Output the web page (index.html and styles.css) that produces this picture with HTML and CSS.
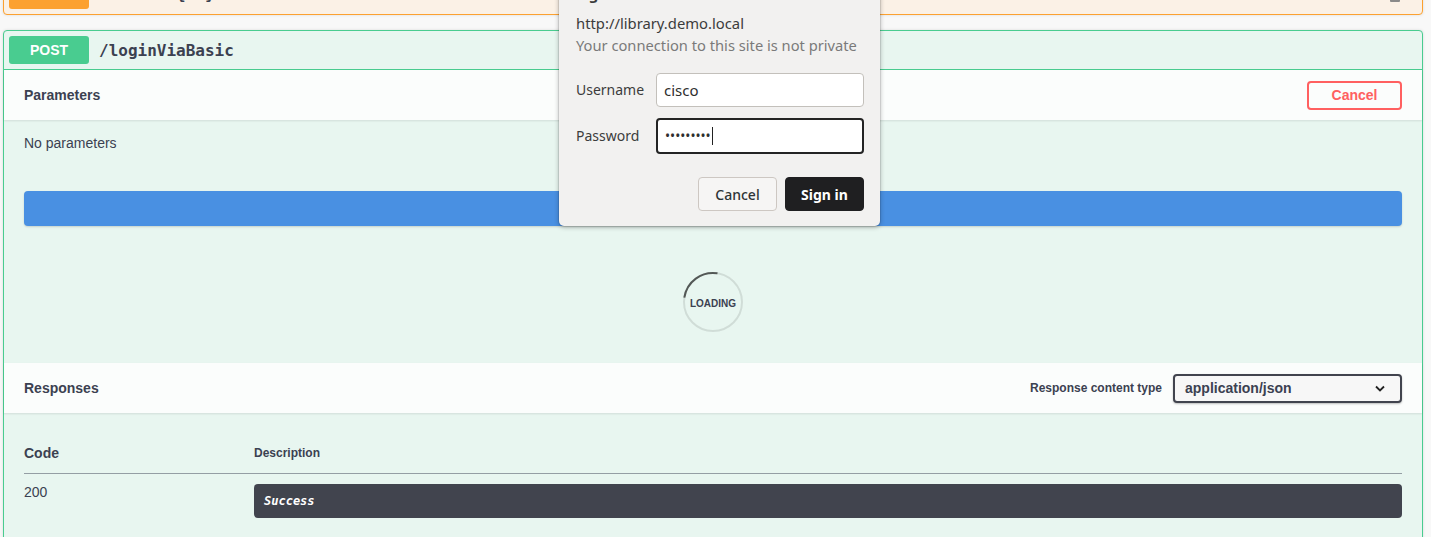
FILE: index.html
```html
<!DOCTYPE html>
<html lang="en">
<head>
<meta charset="utf-8">
<title>Swagger UI – loginViaBasic</title>
<link rel="stylesheet" href="styles.css">
</head>
<body>
<div class="page">
  <div class="opblock opblock-put">
    <div class="summary">
      <span class="method method-put">PUT</span>
      <span class="path">/titles/{id}</span>
      <svg class="lock" width="12" height="16" viewBox="0 0 12 16"><path d="M3 7V4.5a3 3 0 0 1 6 0V7" fill="none" stroke="#8a8a8a" stroke-width="1.6"/><rect x="1" y="7" width="10" height="8" rx="1" fill="#8a8a8a"/></svg>
    </div>
  </div>

  <div class="opblock opblock-post">
    <div class="summary">
      <span class="method method-post">POST</span>
      <span class="path">/loginViaBasic</span>
    </div>

    <div class="section-header">
      <h4 class="section-title">Parameters</h4>
      <button class="btn-cancel">Cancel</button>
    </div>
    <div class="params-body">
      <p class="no-params">No parameters</p>
    </div>
    <div class="execute-wrapper">
      <button class="btn-execute"></button>
    </div>
    <div class="loading-wrapper">
      <div class="loading">
        <svg class="spinner" width="62" height="62" viewBox="0 0 62 62">
          <circle cx="31" cy="31" r="29" fill="none" stroke="rgba(0,0,0,0.1)" stroke-width="2"/>
          <path d="M2.3 26.7 A29 29 0 0 1 35.5 2.3" fill="none" stroke="rgba(0,0,0,0.6)" stroke-width="2"/>
        </svg>
        <span class="loading-text">LOADING</span>
      </div>
    </div>

    <div class="section-header">
      <h4 class="section-title">Responses</h4>
      <div class="content-type">
        <span class="content-type-label">Response content type</span>
        <div class="select">
          <span>application/json</span>
          <svg width="10" height="7" viewBox="0 0 10 7"><path d="M1 1.5l4 4 4-4" fill="none" stroke="#222" stroke-width="1.8"/></svg>
        </div>
      </div>
    </div>
    <div class="responses-body">
      <table class="responses-table">
        <thead>
          <tr>
            <th class="col-code">Code</th>
            <th class="col-desc">Description</th>
          </tr>
        </thead>
        <tbody>
          <tr>
            <td class="cell-code">200</td>
            <td class="cell-desc"><div class="markdown">Success</div></td>
          </tr>
        </tbody>
      </table>
    </div>
  </div>
</div>

<div class="auth-dialog">
  <div class="dialog-title">Sign in</div>
  <div class="dialog-url">http://library.demo.local</div>
  <div class="dialog-note">Your connection to this site is not private</div>
  <div class="dialog-form">
    <span class="field-label">Username</span>
    <div class="field">cisco</div>
    <span class="field-label">Password</span>
    <div class="field field-focus"><span class="dots">•••••••••</span><span class="caret"></span></div>
  </div>
  <div class="dialog-actions">
    <button class="dlg-btn dlg-cancel">Cancel</button>
    <button class="dlg-btn dlg-signin">Sign in</button>
  </div>
</div>
</body>
</html>
```

FILE: styles.css
```css
html, body {
  margin: 0;
  padding: 0;
  height: 100%;
  overflow: hidden;
  background: #f8f8f8;
}

body {
  font-family: "Liberation Sans", Arial, sans-serif;
  color: #3b4151;
  position: relative;
}

.page {
  margin-top: -25px;
  padding: 0 8px 0 3px;
}

.opblock {
  border: 1px solid;
  border-radius: 4px;
  margin-bottom: 15px;
  box-shadow: 0 0 3px rgba(0, 0, 0, 0.12);
}

.opblock-put {
  border-color: #fca130;
  background: #fbf1e6;
}

.opblock-post {
  border-color: #49cc90;
  background: #e8f6f0;
  padding-bottom: 40px;
}

.summary {
  display: flex;
  align-items: center;
  padding: 5px;
}

.opblock-post .summary {
  border-bottom: 1px solid #49cc90;
}

.method {
  display: flex;
  align-items: center;
  justify-content: center;
  width: 80px;
  height: 28px;
  border-radius: 3px;
  color: #fff;
  font-weight: bold;
  font-size: 14px;
}

.method-put {
  background: #fca130;
}

.method-post {
  background: #49cc90;
}

.path {
  font-family: "DejaVu Sans Mono", monospace;
  font-weight: bold;
  font-size: 16px;
  color: #3b4151;
  padding-left: 10px;
  flex: 1;
}

.opblock-put .path {
  padding-bottom: 4px;
}

.lock {
  margin-right: 16px;
}

.section-header {
  display: flex;
  align-items: center;
  justify-content: space-between;
  height: 50px;
  padding: 0 20px;
  background: rgba(255, 255, 255, 0.8);
  box-shadow: 0 1px 2px rgba(0, 0, 0, 0.1);
  position: relative;
}

.section-title {
  margin: 0;
  font-size: 14px;
  font-weight: bold;
  color: #3b4151;
}

.btn-cancel {
  width: 95px;
  height: 29px;
  border: 2px solid #ff6060;
  border-radius: 4px;
  background: transparent;
  color: #ff6060;
  font-family: "Liberation Sans", Arial, sans-serif;
  font-size: 14px;
  font-weight: bold;
  padding: 0;
}

.params-body {
  padding: 13px 20px 0;
}

.no-params {
  margin: 0;
  font-size: 14px;
  line-height: 20px;
}

.execute-wrapper {
  padding: 38px 20px 0;
}

.btn-execute {
  display: block;
  width: 100%;
  height: 35px;
  border: none;
  border-radius: 4px;
  background: #4990e2;
  box-shadow: 0 1px 2px rgba(0, 0, 0, 0.15);
}

.loading-wrapper {
  display: flex;
  justify-content: center;
  padding: 45px 0 30px;
}

.loading {
  position: relative;
  width: 62px;
  height: 62px;
  display: flex;
  align-items: center;
  justify-content: center;
}

.spinner {
  position: absolute;
  left: 0;
  top: 0;
}

.loading-text {
  font-size: 10px;
  font-weight: bold;
  color: #3b4151;
  margin-top: 2px;
}

.content-type {
  display: flex;
  align-items: center;
}

.content-type-label {
  font-size: 12px;
  font-weight: bold;
  margin-right: 11px;
}

.select {
  box-sizing: border-box;
  width: 229px;
  height: 29px;
  border: 2px solid #41444e;
  border-radius: 4px;
  background: #f7f7f7;
  box-shadow: 0 1px 2px rgba(0, 0, 0, 0.25);
  display: flex;
  align-items: center;
  justify-content: space-between;
  padding: 0 15px 0 10px;
  font-size: 14px;
  font-weight: bold;
  color: #3b4151;
}

.responses-body {
  padding: 0 20px;
}

.responses-table {
  width: 100%;
  border-collapse: collapse;
  margin-top: 32px;
}

.responses-table th {
  text-align: left;
  padding: 0 0 12px;
  line-height: 16px;
  border-bottom: 1px solid rgba(59, 65, 81, 0.28);
  vertical-align: bottom;
}

.col-code {
  width: 230px;
  font-size: 14px;
}

.col-desc {
  font-size: 12px;
}

.responses-table td {
  padding: 10px 0 0;
  vertical-align: top;
  font-size: 14px;
  line-height: 16px;
}

.markdown {
  background: #41444e;
  color: #fff;
  border-radius: 4px;
  padding: 10px;
  font-family: "DejaVu Sans Mono", monospace;
  font-size: 12px;
  line-height: 14px;
  font-style: italic;
  font-weight: bold;
}

/* Browser basic auth dialog */
.auth-dialog {
  position: absolute;
  left: 559px;
  top: -30px;
  width: 321px;
  box-sizing: border-box;
  padding: 14px 16px 15px 17px;
  background: #f2f1f0;
  border-radius: 0 0 5px 5px;
  box-shadow: 0 1px 5px rgba(0, 0, 0, 0.3), 0 0 0 1px rgba(0, 0, 0, 0.08);
  font-family: "Noto Sans", "Open Sans", sans-serif;
  color: #3c3c3c;
}

.dialog-title {
  font-size: 15px;
  font-weight: bold;
  line-height: 20px;
}

.dialog-url {
  margin-top: 9px;
  font-size: 14.8px;
  line-height: 20px;
}

.dialog-note {
  margin-top: 2px;
  font-size: 14.7px;
  line-height: 20px;
  color: #7a7a7a;
}

.dialog-form {
  display: grid;
  grid-template-columns: 80px 1fr;
  row-gap: 11px;
  align-items: center;
  margin-top: 18px;
}

.field-label {
  font-size: 14px;
  padding-bottom: 2px;
}

.field {
  box-sizing: border-box;
  height: 34px;
  background: #fff;
  border: 1px solid #c3c0bb;
  border-radius: 4px;
  padding-left: 7px;
  display: flex;
  align-items: center;
  font-size: 15px;
  color: #2e2e2e;
}

.field-focus {
  height: 36px;
  border: 2px solid #242424;
  padding-left: 7px;
}

.dots {
  font-size: 13.5px;
  letter-spacing: 0;
}

.caret {
  width: 1px;
  height: 18px;
  background: #222;
  margin-left: 1px;
}

.dialog-actions {
  display: flex;
  justify-content: flex-end;
  gap: 8px;
  margin-top: 23px;
}

.dlg-btn {
  width: 79px;
  height: 34px;
  border-radius: 4px;
  font-family: "Noto Sans", "Open Sans", sans-serif;
  font-size: 14px;
  padding: 0;
}

.dlg-cancel {
  background: #f6f5f4;
  border: 1px solid #cdc7c2;
  color: #2e3436;
  font-weight: 500;
}

.dlg-signin {
  background: #1f1f21;
  border: 1px solid #1f1f21;
  color: #fff;
  font-weight: bold;
}
```
